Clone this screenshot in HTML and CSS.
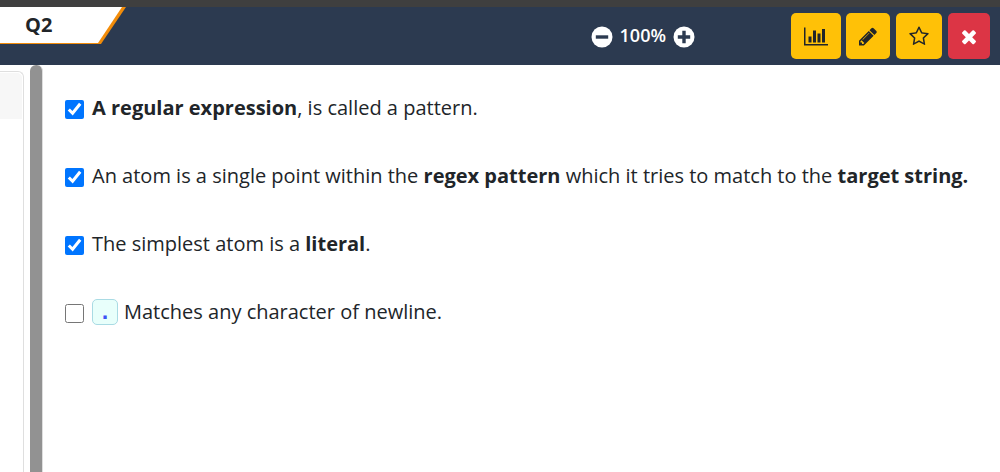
FILE: index.html
```html
<!DOCTYPE html>
<html lang="en">
<head>
<meta charset="utf-8">
<meta name="viewport" content="width=device-width, initial-scale=1">
<title>Quiz – Q2</title>
<link rel="stylesheet" href="styles.css">
</head>
<body>
<div class="page">
  <header class="topbar">
    <div class="tab"><span class="tab-label">Q2</span></div>
    <div class="zoom">
      <button class="zoom-button" type="button" aria-label="Zoom out">
        <svg class="zoom-icon" viewBox="0 0 22 22"><circle cx="11" cy="11" r="10.5" fill="#fff"/><path d="M6.500 11h9" stroke="#2c3a50" stroke-width="3.4" stroke-linecap="square"/></svg>
      </button>
      <span class="zoom-value">100%</span>
      <button class="zoom-button" type="button" aria-label="Zoom in">
        <svg class="zoom-icon" viewBox="0 0 22 22"><circle cx="11" cy="11" r="10.5" fill="#fff"/><path d="M6.500 11h9M11 6.500v9" stroke="#2c3a50" stroke-width="3.4" stroke-linecap="square"/></svg>
      </button>
    </div>
    <div class="actions">
      <button class="action" type="button" aria-label="Statistics">
        <svg class="icon icon-wide" viewBox="0 0 2048 1792"><path d="M640 896v512h-256v-512h256zm384-512v1024h-256v-1024h256zm1024 1152v128h-2048v-1536h128v1408h1920zm-640-896v768h-256v-768h256zm384-384v1152h-256v-1152h256z"/></svg>
      </button>
      <button class="action action-edit" type="button" aria-label="Edit">
        <svg class="icon" viewBox="128 0 1536 1792"><path d="M491 1536l91-91-235-235-91 91v107h128v128h107zm523-928q0-22-22-22-10 0-17 7l-542 542q-7 7-7 17 0 22 22 22 10 0 17-7l542-542q7-7 7-17zm-54-192l416 416-832 832h-416v-416zm683 96q0 53-37 90l-166 166-416-416 166-165q36-38 90-38 53 0 91 38l235 234q37 39 37 91z"/></svg>
      </button>
      <button class="action" type="button" aria-label="Bookmark">
        <svg class="icon icon-star" viewBox="64 0 1664 1792"><path d="M1201 1004l306-297-422-62-189-382-189 382-422 62 306 297-73 421 378-199 377 199zm527-357q0 22-26 48l-363 354 86 500q1 7 1 20 0 50-41 50-19 0-40-12l-449-236-449 236q-22 12-40 12-21 0-31.500-14.500t-10.500-35.500q0-6 2-20l86-500-364-354q-25-27-25-48 0-37 56-46l502-73 225-455q19-41 49-41t49 41l225 455 502 73q56 9 56 46z"/></svg>
      </button>
      <button class="action action-close" type="button" aria-label="Close">
        <svg class="icon icon-close" viewBox="220 0 1352 1792"><path d="M1490 1322q0 40-28 68l-136 136q-28 28-68 28t-68-28l-294-294-294 294q-28 28-68 28t-68-28l-136-136q-28-28-28-68t28-68l294-294-294-294q-28-28-28-68t28-68l136-136q28-28 68-28t68 28l294 294 294-294q28-28 68-28t68 28l136 136q28 28 28 68t-28 68l-294 294 294 294q28 28 28 68z"/></svg>
      </button>
    </div>
  </header>
  <main class="content">
    <aside class="side"><div class="card"><div class="card-head"></div></div></aside>
    <div class="splitter"></div>
    <form class="options">
      <label class="option"><input class="check" type="checkbox" checked><span><b>A regular expression</b>, is called a pattern.</span></label>
      <label class="option"><input class="check" type="checkbox" checked><span>An atom is a single point within the <b>regex pattern</b> which it tries to match to the <b>target string.</b></span></label>
      <label class="option"><input class="check" type="checkbox" checked><span>The simplest atom is a <b>literal</b>.</span></label>
      <label class="option"><input class="check" type="checkbox"><code class="code">.</code><span>Matches any character of newline.</span></label>
    </form>
  </main>
</div>
</body>
</html>
```
FILE: styles.css
```css
* { box-sizing: border-box; }
body {
  margin: 0;
  background: #fff;
  color: #212529;
  font-family: "Segoe UI", "Open Sans", sans-serif;
  font-size: 20px;
}
.page {
  display: flex;
  flex-direction: column;
  min-height: 100vh;
}
.topbar {
  display: flex;
  align-items: flex-start;
  height: 65px;
  border-top: 7px solid #3f3f3f;
  background: #2c3a50;
}
.tab {
  width: 126px;
  height: 37px;
  background: #f28c0a;
  clip-path: polygon(0 0, 100% 0, 101px 100%, 0 100%);
}
.tab-label {
  display: block;
  height: 36px;
  padding-left: 25px;
  background: #fff;
  clip-path: polygon(0 0, 122px 0, 98px 100%, 0 100%);
  font-size: 20px;
  font-weight: 700;
  line-height: 36px;
}
.zoom {
  display: flex;
  align-items: center;
  gap: 7px;
  margin-left: auto;
  margin-right: 96px;
  padding-top: 19px;
  color: #fff;
}
.zoom-value {
  font-size: 18px;
  font-weight: 600;
  line-height: 22px;
  margin: -5px 0 0;
}
.zoom-button {
  display: flex;
  padding: 0;
  border: 0;
  background: none;
}
.zoom-icon { width: 22px; height: 22px; }
.actions {
  display: flex;
  gap: 5px;
  padding: 6px 10px 0 0;
}
.action {
  display: flex;
  align-items: center;
  justify-content: center;
  height: 46px;
  padding: 0 13px;
  border: 0;
  border-radius: 5px;
  background: #ffc107;
}
.action-edit { margin-right: 1px; }
.action-close { margin-left: 1px; background: #dc3545; }
.icon { width: 18px; height: 21px; fill: #212529; }
.icon-wide { width: 24px; }
.icon-star { width: 20px; }
.icon-close { width: 16px; fill: #fff; }
.content {
  display: flex;
  flex: 1;
}
.side {
  display: flex;
  width: 30px;
  padding: 6px 6px 0 0;
}
.card {
  flex: 1;
  padding: 1px 1px 0 0;
  border: 1px solid #dfdfdf;
  border-width: 1px 1px 0 0;
  border-radius: 0 6px 0 0;
}
.card-head {
  height: 46px;
  border-radius: 0 5px 0 0;
  background: #f7f7f7;
}
.splitter {
  width: 13px;
  border-right: 1px solid #dedede;
  border-radius: 6px 6px 0 0;
  background: #929292;
}
.options {
  display: flex;
  flex: 1;
  flex-direction: column;
  gap: 40px;
  padding: 29px 0 30px 22px;
}
.option {
  display: flex;
  align-items: center;
  min-height: 28px;
  line-height: 28px;
}
.check {
  flex: none;
  width: 19px;
  height: 19px;
  margin: 2px 8px 0 0;
  accent-color: #0075ff;
}
.code {
  width: 26px;
  height: 26px;
  margin-right: 6px;
  border: 1px solid #a9dbe4;
  border-radius: 5px;
  background: #e8fffb;
  color: #3d52f5;
  font-family: "DejaVu Sans Mono", monospace;
  font-size: 20px;
  font-weight: 700;
  line-height: 24px;
  text-align: center;
}
```
